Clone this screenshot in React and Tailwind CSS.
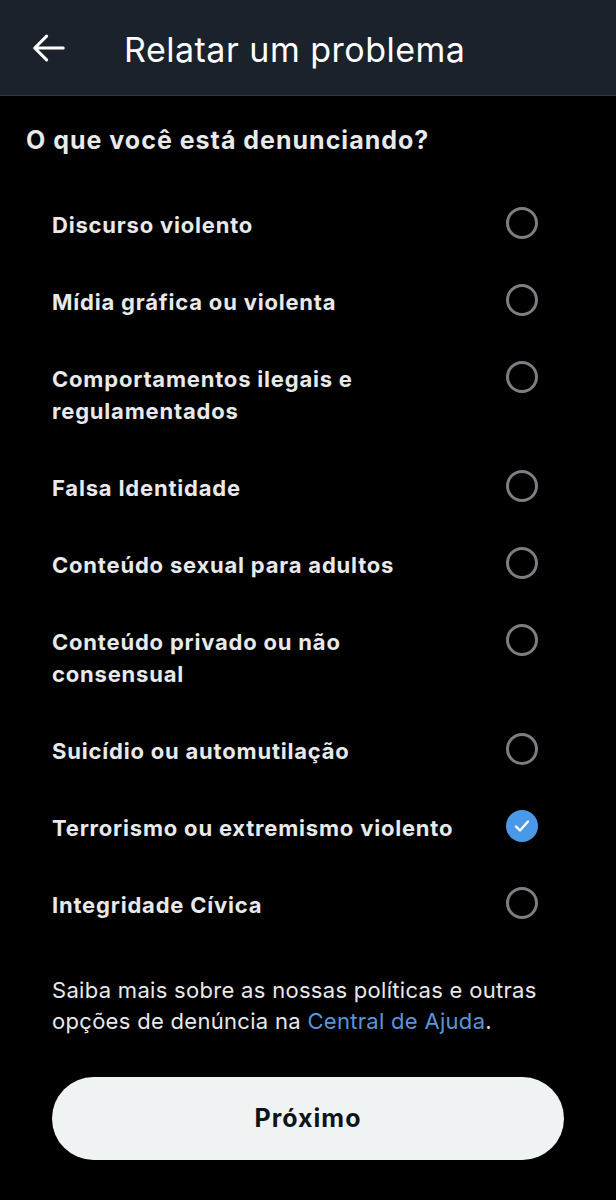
import React from "react";

const items = [
  ["Discurso violento"],
  ["Mídia gráfica ou violenta"],
  ["Comportamentos ilegais e", "regulamentados"],
  ["Falsa Identidade"],
  ["Conteúdo sexual para adultos"],
  ["Conteúdo privado ou não", "consensual"],
  ["Suicídio ou automutilação"],
  ["Terrorismo ou extremismo violento", null, true],
  ["Integridade Cívica"],
];

function Radio({ checked }) {
  if (checked) {
    return (
      <div className="w-[32px] h-[32px] rounded-full bg-[#4a99e9] flex items-center justify-center shrink-0">
        <svg width="20" height="20" viewBox="0 0 20 20" fill="none">
          <path d="M4 10.5l4 4 8-9" stroke="white" strokeWidth="2.4" strokeLinecap="round" strokeLinejoin="round" />
        </svg>
      </div>
    );
  }
  return <div className="w-[32px] h-[32px] rounded-full border-[3px] border-[#7b7e82] shrink-0" />;
}

export default function App() {
  return (
    <div className="w-[616px] h-[1200px] bg-black text-[#e7e9ea] overflow-hidden" style={{ fontFamily: "Inter, Roboto, sans-serif" }}>
      <div className="h-[96px] bg-[#1b222c] border-b border-[#2f3640] flex items-center">
        <div className="w-[124px] flex pl-[30px]">
          <svg width="38" height="38" viewBox="0 0 24 24" fill="none">
            <path d="M21 12H3M10.5 4.5L3 12l7.5 7.5" stroke="white" strokeWidth="1.9" strokeLinecap="round" strokeLinejoin="round" />
          </svg>
        </div>
        <div className="text-[34px] tracking-[0.5px] text-white leading-none mt-[4px]">Relatar um problema</div>
      </div>
      <div className="pl-[26px] pt-[28px] h-[88px] text-[25px] tracking-[1px] font-bold leading-[32px]">O que você está denunciando?</div>
      <div>
        {items.map(([a, b, checked], i) => (
          <div key={i} className="flex items-start justify-between pl-[52px] pr-[78px] pt-[22.5px] pb-[20.5px]">
            <div className="text-[22px] tracking-[0.8px] font-bold leading-[32px] text-[#e7e9ea] pt-[2px]">
              <div>{a}</div>
              {b && <div>{b}</div>}
            </div>
            <Radio checked={checked} />
          </div>
        ))}
      </div>
      <div className="pl-[52px] pr-[40px] pt-[34px] text-[22px] tracking-[0.3px] leading-[31px] text-[#e7e9ea]">
        <div>Saiba mais sobre as nossas políticas e outras</div>
        <div>
          opções de denúncia na <span className="text-[#5a95d9]">Central de Ajuda</span>.
        </div>
      </div>
      <div className="px-[52px] pt-[40px]">
        <div className="h-[83px] rounded-full bg-[#eff3f4] flex items-center justify-center text-[25px] tracking-[1px] font-bold text-[#0f1419]">
          Próximo
        </div>
      </div>
    </div>
  );
}
